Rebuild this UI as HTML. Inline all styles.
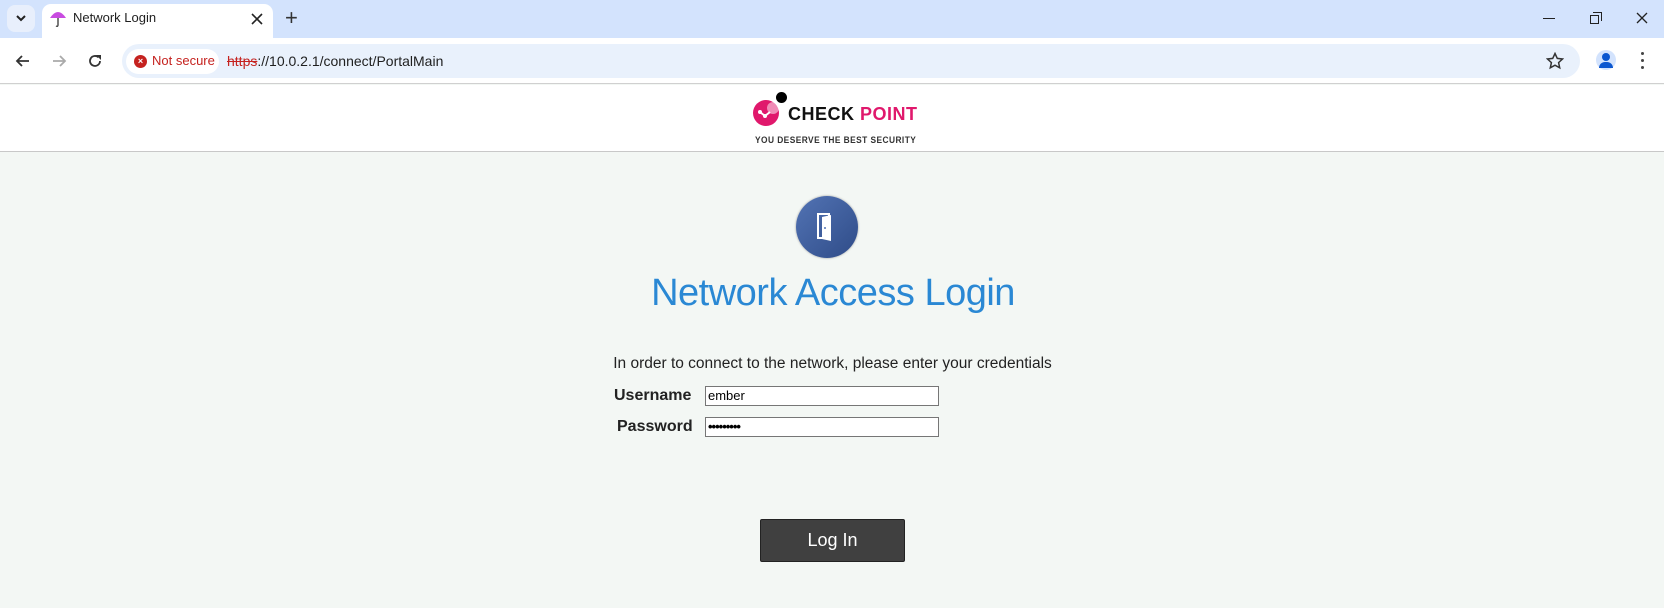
<!DOCTYPE html>
<html><head><meta charset="utf-8"><style>
*{margin:0;padding:0;box-sizing:border-box}
body{width:1664px;height:608px;overflow:hidden;font-family:"Liberation Sans","DejaVu Sans",sans-serif;background:#f3f7f4;position:relative}
.abs{position:absolute}
#tabbar{left:0;top:0;width:1664px;height:38px;background:#d3e3fd}
#toolbar{left:0;top:38px;width:1664px;height:46px;background:#fff;border-bottom:1px solid #d0d0d0}
#header{left:0;top:85px;width:1664px;height:67px;background:#fff;border-bottom:1px solid #c8c8c8}
.lbl{font-weight:bold;font-size:16px;color:#222}
.inp{background:#fff;border:1px solid #767676;height:20px;width:234px;font-size:13px;padding-left:2px;line-height:18px;color:#000}
</style></head><body>
<div id="tabbar" class="abs"></div>
<div class="abs" style="left:7px;top:5px;width:28px;height:27px;background:#e8effc;border-radius:8px"></div>
<svg class="abs" style="left:14px;top:12px" width="14" height="12"><path d="M3 4l4 4 4-4" stroke="#222" stroke-width="2" fill="none"/></svg>
<div class="abs" style="left:42px;top:4px;width:231px;height:36px;background:#fff;border-radius:9px 9px 0 0"></div>
<svg class="abs" style="left:48px;top:8px" width="20" height="20"><path d="M2 10 Q10 -2 18 10 Z" fill="#c84be0"/><path d="M10 10v7q0 2-2 1" stroke="#444" stroke-width="1.4" fill="none"/></svg>
<div class="abs" style="left:73px;top:10px;font-size:13px;color:#1f1f1f">Network Login</div>
<svg class="abs" style="left:251px;top:13px" width="12" height="12"><path d="M1 1l10 10M11 1L1 11" stroke="#222" stroke-width="1.6"/></svg>
<div class="abs" style="left:285px;top:5px;font-size:22px;color:#333">+</div>
<div class="abs" style="left:1543px;top:18px;width:12px;border-top:1px solid #222"></div>
<div class="abs" style="left:1590px;top:15px;width:9px;height:9px;border:1.3px solid #222"></div>
<div class="abs" style="left:1593px;top:12px;width:9px;height:9px;border-top:1.3px solid #222;border-right:1.3px solid #222"></div>
<svg class="abs" style="left:1636px;top:12px" width="12" height="12"><path d="M1 1l10 10M11 1L1 11" stroke="#222" stroke-width="1.3"/></svg>
<div id="toolbar" class="abs"></div>
<svg class="abs" style="left:15px;top:53px" width="16" height="16"><path d="M14 8H2M7 3L2 8l5 5" stroke="#333" stroke-width="1.8" fill="none"/></svg>
<svg class="abs" style="left:51px;top:53px" width="16" height="16"><path d="M2 8h12M9 3l5 5-5 5" stroke="#aaa" stroke-width="1.8" fill="none"/></svg>
<svg class="abs" style="left:87px;top:53px" width="16" height="16"><path d="M13 8a5 5 0 1 1-1.5-3.6" stroke="#333" stroke-width="1.8" fill="none"/><path d="M9 2h5v5z" fill="#333"/></svg>
<div class="abs" style="left:122px;top:44px;width:1458px;height:34px;background:#e9f1fc;border-radius:17px"></div>
<div class="abs" style="left:126px;top:49px;width:93px;height:25px;background:#fff;border-radius:13px"></div>
<div class="abs" style="left:134px;top:55px;width:13px;height:13px;border-radius:50%;background:#c5221f;color:#fff;font-size:9px;line-height:13px;text-align:center;font-weight:bold">×</div>
<div class="abs" style="left:152px;top:53px;font-size:13px;color:#c5221f">Not secure</div>
<div class="abs" style="left:227px;top:53px;font-size:14px;color:#1f1f1f"><span style="color:#c5221f;text-decoration:line-through">https</span>://10.0.2.1/connect/PortalMain</div>
<svg class="abs" style="left:1546px;top:52px" width="18" height="18"><path d="M9 1.5l2.3 4.9 5.2.6-3.9 3.6 1.1 5.2L9 13.2l-4.7 2.6 1.1-5.2L1.5 7l5.2-.6z" stroke="#333" stroke-width="1.5" fill="none"/></svg>
<div class="abs" style="left:1596px;top:50px;width:20px;height:20px;border-radius:50%;background:#d3e3fd"></div>
<div class="abs" style="left:1602px;top:53px;width:8px;height:8px;border-radius:50%;background:#0b57d0"></div>
<div class="abs" style="left:1599px;top:62px;width:14px;height:6px;border-radius:7px 7px 0 0;background:#0b57d0"></div>
<div class="abs" style="left:1641px;top:52px;width:3px;height:3px;border-radius:50%;background:#444"></div>
<div class="abs" style="left:1641px;top:59px;width:3px;height:3px;border-radius:50%;background:#444"></div>
<div class="abs" style="left:1641px;top:66px;width:3px;height:3px;border-radius:50%;background:#444"></div>
<div id="header" class="abs"></div>
<svg class="abs" style="left:752px;top:99px" width="30" height="30"><circle cx="14" cy="14" r="13" fill="#e0186c"/><circle cx="21" cy="9" r="6" fill="#fff" opacity="0.5"/><path d="M8 13l5 4 5-4" stroke="#fff" stroke-width="2" fill="none"/><circle cx="8" cy="13" r="2" fill="#fff"/><circle cx="13" cy="17" r="2" fill="#fff"/></svg>
<div class="abs" style="left:776px;top:92px;width:11px;height:11px;border-radius:50%;background:#000"></div>
<div class="abs" style="left:788px;top:104px;font-size:18px;font-weight:bold;color:#111;letter-spacing:0.5px">CHECK <span style="color:#e0186c">POINT</span></div>
<div class="abs" style="left:755px;top:135px;font-size:9.5px;font-weight:bold;color:#333;letter-spacing:0.5px;transform:scaleX(0.88);transform-origin:left">YOU DESERVE THE BEST SECURITY</div>
<div class="abs" style="left:796px;top:196px;width:62px;height:62px;border-radius:50%;background:linear-gradient(135deg,#5273b4,#2f4c88);box-shadow:0 0 2px #999"></div>
<svg class="abs" style="left:812px;top:211px" width="30" height="32"><path d="M6 3h11v24H6z" fill="none" stroke="#fff" stroke-width="2"/><path d="M10 6l9-2v26l-9-2z" fill="#fff"/><circle cx="13" cy="17" r="1" fill="#5273b4"/></svg>
<div class="abs" style="left:650px;top:272px;width:366px;text-align:center;font-size:38px;color:#2a88d4;white-space:nowrap;letter-spacing:-0.5px">Network Access Login</div>
<div class="abs" style="left:612px;top:355px;width:441px;text-align:center;font-size:15.5px;color:#222;white-space:nowrap">In order to connect to the network, please enter your credentials</div>
<div class="abs lbl" style="left:614px;top:387px">Username</div>
<div class="abs lbl" style="left:617px;top:418px">Password</div>
<div class="abs inp" style="left:705px;top:386px">ember</div>
<div class="abs inp" style="left:705px;top:417px;font-weight:bold;letter-spacing:-1px">•••••••••</div>
<div class="abs" style="left:760px;top:519px;width:145px;height:43px;background:#404040;border:1px solid #222;border-radius:2px;color:#fff;font-size:18px;text-align:center;line-height:41px">Log In</div>
</body></html>
